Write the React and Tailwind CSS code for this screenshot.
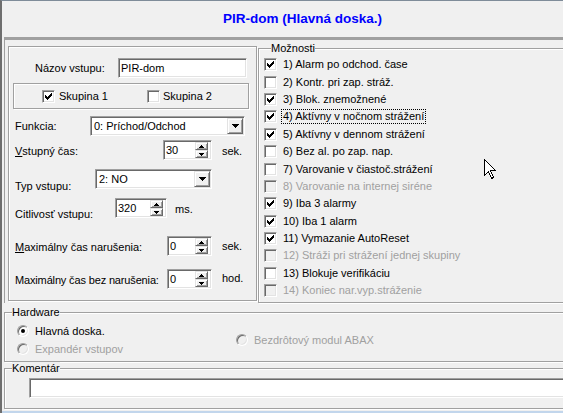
import React from "react";

const sunken =
  "border border-t-[#a0a0a0] border-l-[#a0a0a0] border-b-white border-r-white shadow-[inset_1px_1px_0_#696969,inset_-1px_-1px_0_#e3e3e3]";
const raised =
  "border border-t-[#e3e3e3] border-l-[#e3e3e3] border-b-[#696969] border-r-[#696969] shadow-[inset_1px_1px_0_#ffffff,inset_-1px_-1px_0_#a0a0a0] bg-[#f0f0f0]";
const etched =
  "border border-[#a0a0a0] shadow-[inset_1px_1px_0_#ffffff,1px_1px_0_#ffffff]";

function Check({ checked, disabled }) {
  return (
    <span
      className={`w-[13px] h-[13px] shrink-0 flex items-center justify-center ${sunken} ${
        disabled ? "bg-[#f0f0f0]" : "bg-white"
      }`}
    >
      {checked && (
        <svg width="7" height="7" viewBox="0 0 7 7" shapeRendering="crispEdges">
          <path
            fill="#000"
            d="M6 0h1v1h-1z M5 1h2v1h-2z M0 2h1v1h-1z M4 2h3v1h-3z M0 3h2v1h-2z M3 3h3v1h-3z M0 4h5v1h-5z M1 5h3v1h-3z M2 6h1v1h-1z"
          />
        </svg>
      )}
    </span>
  );
}

function Radio({ checked, disabled }) {
  return (
    <span
      className={`w-[12px] h-[12px] shrink-0 rounded-full flex items-center justify-center border border-t-[#a0a0a0] border-l-[#a0a0a0] border-b-white border-r-white shadow-[inset_1px_1px_0_#696969,inset_-1px_-1px_0_#e3e3e3] ${
        disabled ? "bg-[#f0f0f0]" : "bg-white"
      }`}
    >
      {checked && <span className="w-[4px] h-[4px] rounded-full bg-black" />}
    </span>
  );
}

function DownArrow() {
  return (
    <svg width="7" height="4" viewBox="0 0 7 4" shapeRendering="crispEdges">
      <path fill="#000" d="M0 0h7v1h-7z M1 1h5v1h-5z M2 2h3v1h-3z M3 3h1v1h-1z" />
    </svg>
  );
}

function SmallUp() {
  return (
    <svg width="5" height="3" viewBox="0 0 5 3" shapeRendering="crispEdges">
      <path fill="#000" d="M2 0h1v1h-1z M1 1h3v1h-3z M0 2h5v1h-5z" />
    </svg>
  );
}
function SmallDown() {
  return (
    <svg width="5" height="3" viewBox="0 0 5 3" shapeRendering="crispEdges">
      <path fill="#000" d="M0 0h5v1h-5z M1 1h3v1h-3z M2 2h1v1h-1z" />
    </svg>
  );
}

function Spin({ value, width }) {
  return (
    <div className={`h-[20px] ${width} shrink-0 ${sunken} bg-white flex items-center`}>
      <span className="flex-1 pl-[2px]">{value}</span>
      <div className="w-[13px] h-[16px] mr-[3px] flex flex-col">
        <div className={`h-[8px] ${raised} flex items-center justify-center`}>
          <SmallUp />
        </div>
        <div className={`h-[8px] ${raised} flex items-center justify-center`}>
          <SmallDown />
        </div>
      </div>
    </div>
  );
}

function Select({ value, width }) {
  return (
    <div className={`h-[20px] ${width} shrink-0 ${sunken} bg-white flex items-center`}>
      <span className="flex-1 pl-[3px]">{value}</span>
      <div className={`w-[16px] h-[16px] mr-[1px] ${raised} flex items-center justify-center`}>
        <DownArrow />
      </div>
    </div>
  );
}

const options = [
  { t: "1) Alarm po odchod. čase", c: true },
  { t: "2) Kontr. pri zap. stráž." },
  { t: "3) Blok. znemožnené", c: true },
  { t: "4) Aktívny v nočnom strážení", c: true, f: true },
  { t: "5) Aktívny v dennom strážení", c: true },
  { t: "6) Bez al. po zap. nap." },
  { t: "7) Varovanie v čiastoč.strážení" },
  { t: "8) Varovanie na internej siréne", d: true },
  { t: "9) Iba 3 alarmy", c: true },
  { t: "10) Iba 1 alarm", c: true },
  { t: "11) Vymazanie AutoReset", c: true },
  { t: "12) Stráži pri strážení jednej skupiny", d: true },
  { t: "13) Blokuje verifikáciu" },
  { t: "14) Koniec nar.vyp.stráženie", d: true },
];

export default function App() {
  return (
    <div className="relative w-[563px] h-[413px] overflow-hidden whitespace-nowrap bg-[#f0f0f0] text-black text-[11px] leading-[13px] font-['Liberation_Sans',Arial,sans-serif] border-l-2 border-l-[#6e6e6e] border-t border-t-[#7f8c99] flex flex-col">
      {/* header */}
      <div className="h-[36px] shrink-0 flex items-center pl-[221px]">
        <span className="text-[13.5px] leading-[16px] font-bold text-[#0000ff]">
          PIR-dom (Hlavná doska.)
        </span>
      </div>

      {/* main */}
      <div className="ml-[2px] border-t-[3px] border-t-[#a0a0a0] flex flex-col">
        <div className="flex items-start border-l border-l-[#a0a0a0]">
          {/* left panel */}
          <div className={`mt-[6px] ml-[3px] w-[249px] h-[255px] shrink-0 ${etched} flex flex-col`}>
            <div className="mt-[11px] h-[20px] flex items-center">
              <span className="w-[109px] pl-[26px] shrink-0">Názov vstupu:</span>
              <div className={`w-[129px] h-[20px] ${sunken} bg-white flex items-center pl-[2px]`}>
                PIR-dom
              </div>
            </div>

            <div className={`mt-[5px] ml-[4px] w-[236px] h-[26px] ${etched} flex items-center pl-[28px]`}>
              <div className="w-[105px] flex items-center gap-[4px]">
                <Check checked />
                <span>Skupina 1</span>
              </div>
              <div className="flex items-center gap-[3px]">
                <Check />
                <span>Skupina 2</span>
              </div>
            </div>

            <div className="mt-[7px] h-[20px] flex items-center">
              <span className="w-[81px] pl-[6px] shrink-0">Funkcia:</span>
              <Select value="0: Príchod/Odchod" width="w-[155px]" />
            </div>

            <div className="mt-[4px] h-[20px] flex items-center">
              <span className="w-[154px] pl-[6px] shrink-0 mt-[3px]">
                <span className="underline">V</span>stupný čas:
              </span>
              <Spin value="30" width="w-[49px]" />
              <span className="ml-[10px] mt-[2px]">sek.</span>
            </div>

            <div className="mt-[9px] h-[20px] flex items-start">
              <span className="w-[86px] pl-[6px] shrink-0 mt-[11px]">Typ vstupu:</span>
              <Select value="2: NO" width="w-[117px]" />
            </div>

            <div className="mt-[9px] h-[20px] flex items-start">
              <span className="w-[106px] pl-[6px] shrink-0 mt-[10px]">Citlivosť vstupu:</span>
              <Spin value="320" width="w-[52px]" />
              <span className="ml-[8px] mt-[5px]">ms.</span>
            </div>

            <div className="mt-[18px] h-[20px] flex items-center">
              <span className="w-[158px] pl-[6px] shrink-0 mt-[2px]">
                <span className="underline">M</span>aximálny čas narušenia:
              </span>
              <Spin value="0" width="w-[45px]" />
              <span className="ml-[10px]">sek.</span>
            </div>

            <div className="mt-[13px] h-[20px] flex items-center">
              <span className="w-[158px] pl-[6px] shrink-0 mt-[2px] tracking-[-0.15px]">Maximálny čas bez narušenia:</span>
              <Spin value="0" width="w-[45px]" />
              <span className="ml-[10px] -mt-[2px]">hod.</span>
            </div>
          </div>

          {/* Možnosti */}
          <fieldset className={`mt-[2px] ml-[1px] w-[330px] h-[261px] shrink-0 ${etched} pl-[5px] pt-[1px]`}>
            <legend className="ml-[7px] px-0 bg-[#f0f0f0] leading-[13px]">Možnosti</legend>
            {options.map((o) => (
              <div key={o.t} className="h-[17.4px] flex items-center gap-[6px]">
                <Check checked={o.c} disabled={o.d} />
                <span
                  className={`${o.d ? "text-[#a0a0a0]" : ""} ${
                    o.f ? "border border-dotted border-black -ml-[2px] pl-[1px] pr-[1px]" : ""
                  }`}
                >
                  {o.t}
                </span>
              </div>
            ))}
          </fieldset>
        </div>

        {/* Hardware */}
        <fieldset className={`mt-[3px] w-[600px] shrink-0 ${etched} pt-[3px] pb-[3px]`}>
          <legend className="ml-[7px] px-0 bg-[#f0f0f0] leading-[13px]">Hardware</legend>
          <div className="flex items-center">
            <div className="w-[231px] pl-[12px] flex flex-col">
              <div className="h-[18px] flex items-center gap-[6px]">
                <Radio checked />
                <span>Hlavná doska.</span>
              </div>
              <div className="h-[18px] flex items-center gap-[6px]">
                <Radio disabled />
                <span className="text-[#a0a0a0]">Expandér vstupov</span>
              </div>
            </div>
            <div className="flex items-center gap-[6px]">
              <Radio disabled />
              <span className="text-[#a0a0a0]">Bezdrôtový modul ABAX</span>
            </div>
          </div>
        </fieldset>

        {/* Komentár */}
        <fieldset className={`mt-[0px] w-[600px] shrink-0 ${etched} pt-[3px] pb-[10px]`}>
          <legend className="ml-[7px] px-0 bg-[#f0f0f0] leading-[13px]">Komentár</legend>
          <div className={`ml-[24px] w-[560px] h-[20px] ${sunken} bg-white`} />
        </fieldset>
      </div>
      <div className="mt-auto h-[2px] bg-[#c2d6ec]" />

      {/* mouse cursor */}
      <svg
        className="absolute left-[482px] top-[158px]"
        width="13"
        height="21"
        viewBox="0 0 13 21"
        shapeRendering="crispEdges"
      >
        <path
          d="M0.5 0.5 L0.5 16.5 L4.5 12.5 L7.5 19.5 L9.5 18.5 L6.5 11.5 L11.5 11.5 Z"
          fill="#fff"
          stroke="#000"
          strokeWidth="1"
        />
      </svg>
    </div>
  );
}
